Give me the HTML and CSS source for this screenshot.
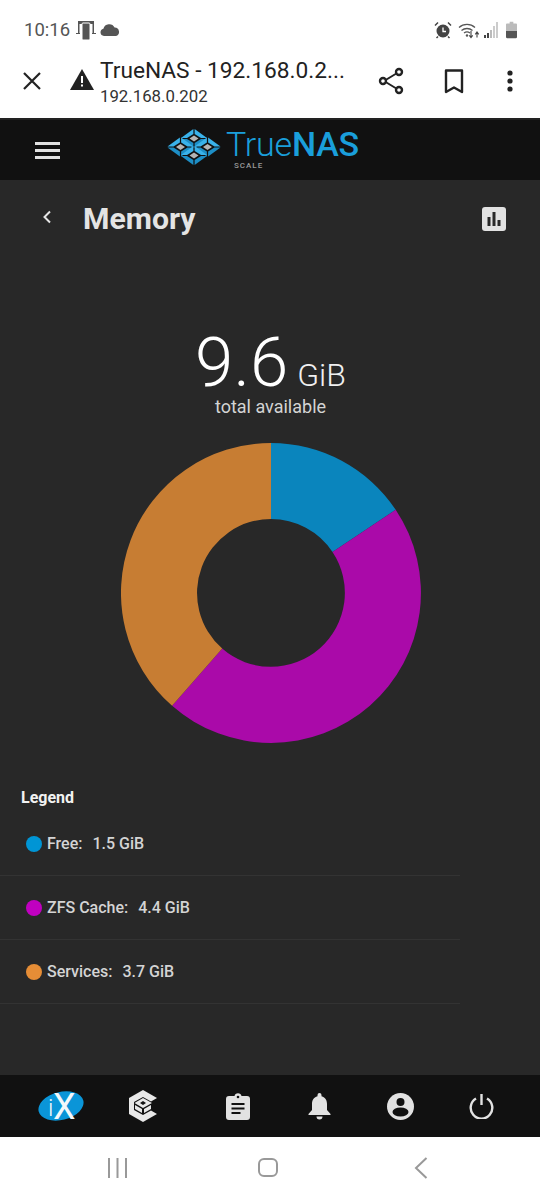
FILE: index.html

```html
<!DOCTYPE html>
<html lang="en">
<head>
  <meta charset="UTF-8">
  <title>TrueNAS - Memory</title>
  <link rel="stylesheet" href="styles.css">
</head>
<body>
  <div class="screen">
    <div class="status-bar">
      <div class="status-left">
        <span class="clock">10:16</span>
        <svg class="st-cast" width="20" height="19" viewBox="0 0 20 19"><path d="M2 0h16v12h-1.500V3h-13v9H2z M0 12h4v1H0z M16 12h4v1h-4z" fill="#555"/><rect x="6" y="2" width="8" height="17" rx="1" fill="#555" stroke="#fff" stroke-width="1"/></svg>
        <svg class="st-cloud" width="20" height="12" viewBox="0 0 20 12"><path d="M4 12a3.700 3.700 0 0 1-.6-7.300A6 6 0 0 1 14.600 3.600 4.300 4.300 0 0 1 16 12z" fill="#555"/></svg>
      </div>
      <div class="status-right">
        <svg width="18" height="18" viewBox="0 0 18 18"><circle cx="9" cy="10" r="6.500" fill="#444"/><path d="M9 6.500V10.500H12" stroke="#fff" stroke-width="1.300" fill="none"/><path d="M1 4.500 L4 1.500 M17 4.500 L14 1.500 M4 15.500 L2.500 17 M14 15.500 L15.500 17" stroke="#444" stroke-width="1.500"/></svg>
        <svg width="22" height="18" viewBox="0 0 22 18"><path d="M1 6.500a12 12 0 0 1 16 0M3.500 9.500a8.500 8.500 0 0 1 11 0M6 12a5 5 0 0 1 6 0" stroke="#555" stroke-width="1.300" fill="none"/><circle cx="9" cy="14.500" r="1.200" fill="#555"/><path d="M13 10v6M11.300 14.300 13 16.500l1.700-2.200M19 16.500v-5M17.300 13.300 19 11l1.700 2.300" stroke="#444" stroke-width="1.100" fill="none"/></svg>
        <svg class="st-signal" width="14" height="16" viewBox="0 0 14 16"><rect x="0" y="13" width="2" height="3" fill="#444"/><rect x="3" y="11" width="2" height="5" fill="#444"/><rect x="6" y="8" width="2" height="8" fill="#bbb"/><rect x="9" y="4" width="2" height="12" fill="#ccc"/><rect x="12" y="0" width="2" height="16" fill="#ccc"/></svg>
        <svg class="st-battery" width="11" height="18" viewBox="0 0 12 18"><path d="M4 0h4v2h3a1 1 0 0 1 1 1v7H0V3a1 1 0 0 1 1-1h3z" fill="#bbb"/><path d="M0 10h12v6.500a1.500 1.500 0 0 1-1.500 1.500h-9A1.500 1.500 0 0 1 0 16.500z" fill="#555"/></svg>
      </div>
    </div>

    <div class="tab-bar">
      <svg class="tab-close" width="20" height="20" viewBox="0 0 20 20"><path d="M2 2 18 18M18 2 2 18" stroke="#222" stroke-width="2.200"/></svg>
      <svg class="tab-warn" width="24" height="21" viewBox="0 0 24 21"><path d="M12 0 24 21H0z" fill="#222"/><path d="M11 7h2v7h-2zM11 15.500h2v2h-2z" fill="#fff"/></svg>
      <div class="tab-title">
        <div class="tab-name">TrueNAS - 192.168.0.2...</div>
        <div class="tab-url">192.168.0.202</div>
      </div>
      <svg class="tab-share" width="26" height="28" viewBox="0 0 26 28"><path d="M6 14 20 5.500M6 14 20 22.500" stroke="#222" stroke-width="2"/><g fill="#fff" stroke="#222" stroke-width="2.400"><circle cx="5" cy="14" r="3"/><circle cx="21" cy="5" r="3"/><circle cx="21" cy="23" r="3"/></g></svg>
      <svg class="tab-mark" width="20" height="25" viewBox="0 0 20 25"><path d="M2 1.500h16v21.500l-8-4.500-8 4.500z" fill="none" stroke="#222" stroke-width="2.400" stroke-linejoin="round"/></svg>
      <svg class="tab-more" width="6" height="22" viewBox="0 0 6 22"><circle cx="3" cy="3" r="2.600" fill="#222"/><circle cx="3" cy="11" r="2.600" fill="#222"/><circle cx="3" cy="19" r="2.600" fill="#222"/></svg>
    </div>

    <div class="top-bar">
      <div class="menu-btn"><span></span><span></span><span></span></div>
      <div class="logo">
        <svg class="logo-mark" width="54" height="36" viewBox="0 0 54 36">
          <defs>
            <g id="cell">
              <path d="M.6 -9.500 13 -.6 7 -.6 .6 -4.500z" fill="#3ab2ea"/>
              <path d="M-.6 -9.500 -13 -.6 -7 -.6 -.6 -4.500z" fill="#3ab2ea"/>
              <path d="M-13 .6 -.6 9.500 -.6 4.500 -7 .6z" fill="#1d8ec6"/>
              <path d="M13 .6 .6 9.500 .6 4.500 7 .6z" fill="#1d8ec6"/>
              <path d="M0 -3 4.500 0 0 3 -4.500 0z" fill="#b4b4b4"/>
            </g>
          </defs>
          <use href="#cell" x="27" y="9.500"/>
          <use href="#cell" x="13.500" y="18"/>
          <use href="#cell" x="40.500" y="18"/>
          <use href="#cell" x="27" y="26.500"/>
        </svg>
        <div class="logo-text">
          <div class="logo-word">True<b>NAS</b></div>
          <div class="logo-sub">SCALE</div>
        </div>
      </div>
    </div>

    <main class="content">
      <div class="page-head">
        <svg class="back" width="10" height="14" viewBox="0 0 10 14"><path d="M8 1.500 2.500 7 8 12.500" fill="none" stroke="#e6e6e6" stroke-width="2"/></svg>
        <h1 class="page-title">Memory</h1>
        <svg class="report" width="24" height="24" viewBox="0 0 24 24"><path d="M3 0h18a3 3 0 0 1 3 3v18a3 3 0 0 1-3 3H3a3 3 0 0 1-3-3V3a3 3 0 0 1 3-3z" fill="#e2e2e2"/><path d="M5.500 10h3v9h-3zM10.500 5h3v14h-3zM15.500 13h3v6h-3z" fill="#282828"/></svg>
      </div>

      <div class="total">
        <div class="total-value">9.6<span class="total-unit">GiB</span></div>
        <div class="total-label">total available</div>
      </div>

      <svg class="donut" width="300" height="300" viewBox="0 0 300 300">
        <path d="M150 0A150 150 0 0 1 274.700 66.700L211.500 108.900A74 74 0 0 0 150 76z" fill="#0a85bd"/>
        <path d="M274.700 66.700A150 150 0 0 1 51.100 262.800L101.200 205.600A74 74 0 0 0 211.500 108.900z" fill="#aa0aa9"/>
        <path d="M51.100 262.800A150 150 0 0 1 150 0V76A74 74 0 0 0 101.200 205.600z" fill="#c77d33"/>
      </svg>

      <section class="legend">
        <h2 class="legend-title">Legend</h2>
        <div class="legend-row"><i class="dot dot-free"></i><span class="legend-name">Free:</span><span>1.5 GiB</span></div>
        <div class="legend-row"><i class="dot dot-zfs"></i><span class="legend-name">ZFS Cache:</span><span>4.4 GiB</span></div>
        <div class="legend-row"><i class="dot dot-services"></i><span class="legend-name">Services:</span><span>3.7 GiB</span></div>
      </section>
    </main>

    <nav class="bottom-nav">
      <svg class="nav-ix" width="46" height="44" viewBox="0 -5 46 44"><ellipse cx="23" cy="17" rx="23" ry="14" transform="rotate(-14 23 17)" fill="#0a95d8"/><text class="ix-i" x="10" y="27">i</text><text class="ix-x" x="15" y="30">X</text></svg>
      <svg class="nav-apps" width="28" height="32" viewBox="0 0 28 32"><path d="M14 0 28 8 22 11.500 14 7 5 12V20L14 25 22 20.500 28 24 14 32 0 24V8z" fill="#e8e8e8"/><path d="M14 8 23 13 14 18 5.500 13z" fill="#e8e8e8"/><path d="M11 13 14 11 17 13 14 15z" fill="#111"/><path d="M6 15 13 19V23L6 19zM22 15 15 19V23L22 19z" fill="#e8e8e8"/></svg>
      <svg class="nav-tasks" width="24" height="27" viewBox="0 0 24 27"><path d="M3 3h5.500a3.600 3.600 0 0 1 7 0H21a3 3 0 0 1 3 3v18a3 3 0 0 1-3 3H3a3 3 0 0 1-3-3V6a3 3 0 0 1 3-3z" fill="#e2e2e2"/><circle cx="12" cy="4" r="1.300" fill="#111"/><path d="M5.500 10h13v2h-13zM5.500 14.500h13v2h-13zM5.500 19h9v2h-9z" fill="#111"/></svg>
      <svg class="nav-bell" width="23" height="27" viewBox="0 0 23 27"><path d="M11.500 0a2 2 0 0 1 2 2v1.200C17.500 4.200 19 7.500 19 11v6l3.500 4v1H.5v-1L4 17v-6C4 7.500 5.500 4.200 9.500 3.200V2a2 2 0 0 1 2-2zM8.500 23.500h6a3 3 0 0 1-6 0z" fill="#e2e2e2"/></svg>
      <svg class="nav-user" width="27" height="27" viewBox="0 0 27 27"><circle cx="13.500" cy="13.500" r="13.500" fill="#e2e2e2"/><circle cx="13.500" cy="9" r="4" fill="#111"/><ellipse cx="13.500" cy="19" rx="8" ry="4.500" fill="#111"/></svg>
      <svg class="nav-power" width="25" height="26" viewBox="0 0 25 26"><path d="M12.500 1v11" stroke="#e2e2e2" stroke-width="2.400" fill="none"/><path d="M7 5.500a10.800 10.800 0 1 0 11 0" stroke="#e2e2e2" stroke-width="2.400" fill="none"/></svg>
    </nav>

    <div class="sys-nav">
      <svg width="21" height="20" viewBox="0 0 21 20"><path d="M2 0v20M10.500 0v20M19 0v20" stroke="#999" stroke-width="2"/></svg>
      <svg width="20" height="19" viewBox="0 0 20 19"><rect x="1" y="1" width="18" height="17" rx="5" fill="none" stroke="#999" stroke-width="2"/></svg>
      <svg class="sys-back" width="14" height="22" viewBox="0 0 14 22"><path d="M12.500 1 2 11l10.500 10" fill="none" stroke="#999" stroke-width="2"/></svg>
    </div>
  </div>
</body>
</html>
```

FILE: styles.css

```css
* {
  box-sizing: border-box;
}

body {
  margin: 0;
  padding: 0;
  background-color: #fff;
  font-family: Roboto, "Liberation Sans", sans-serif;
}

.screen {
  width: 540px;
  height: 1200px;
  display: flex;
  flex-direction: column;
  overflow: hidden;
}

/* phone status bar */
.status-bar {
  height: 46px;
  padding: 21px 23px 0 24px;
  display: flex;
  justify-content: space-between;
  align-items: flex-start;
  background-color: #fff;
}

.status-left, .status-right {
  display: flex;
  align-items: center;
  height: 18px;
}

.status-right {
  gap: 6px;
}

.clock {
  font-size: 18.500px;
  color: #555;
  margin-right: 6px;
}

.st-cloud {
  margin-left: 4px;
}

.st-signal {
  margin-left: -2px;
}

.st-battery {
  margin-left: 2px;
}

/* browser custom tab */
.tab-bar {
  height: 74px;
  display: flex;
  align-items: flex-start;
  background-color: #fff;
  border-bottom: 2px solid #222;
}

.tab-close {
  margin: 25px 0 0 22px;
}

.tab-warn {
  margin: 23px 0 0 28px;
}

.tab-title {
  margin: 11px 0 0 6px;
  width: 256px;
  flex: none;
}

.tab-name {
  font-size: 22.700px;
  line-height: 28px;
  color: #222;
  white-space: nowrap;
}

.tab-url {
  font-size: 16.800px;
  line-height: 20px;
  margin-top: 1px;
  color: #333;
}

.tab-share {
  margin: 21px 0 0 22px;
}

.tab-mark {
  margin: 23px 0 0 40px;
}

.tab-more {
  margin: 24px 0 0 43px;
}

/* truenas header */
.top-bar {
  height: 60px;
  display: flex;
  align-items: center;
  background-color: #111;
}

.menu-btn {
  margin-left: 35px;
  width: 25px;
  display: flex;
  flex-direction: column;
  gap: 4px;
}

.menu-btn span {
  display: block;
  height: 3px;
  background-color: #e2e2e2;
}

.logo {
  margin-left: 107px;
  display: flex;
  align-items: flex-start;
  gap: 5px;
}

.logo-text {
  height: 44px;
  margin-top: -2px;
}

.logo-word {
  font-size: 34px;
  line-height: 34px;
  font-weight: 300;
  color: #1a9fdb;
  letter-spacing: -0.2px;
  white-space: nowrap;
}

.logo-word b {
  font-weight: 500;
}

.logo-sub {
  font-size: 8px;
  line-height: 8px;
  letter-spacing: 1px;
  font-weight: 500;
  color: #9a9a9a;
  margin: 1px 0 0 8px;
}

/* page body */
.content {
  height: 895px;
  background-color: #282828;
  display: flex;
  flex-direction: column;
}

.page-head {
  height: 77px;
  display: flex;
  align-items: center;
}

.back {
  margin: 0 0 4px 42px;
}

.page-title {
  margin: 0 0 0 31px;
  font-size: 30.200px;
  font-weight: 700;
  color: #e4e4e4;
  flex: 1;
}

.report {
  margin-right: 34px;
}

.total {
  margin-top: 74px;
  text-align: center;
  padding-left: 1px;
}

.total-value {
  font-size: 69px;
  line-height: 64px;
  font-weight: 300;
  color: #fff;
}

.total-unit {
  font-size: 32px;
  line-height: 0;
  margin-left: 9px;
  color: #f0f0f0;
}

.total-label {
  font-size: 18px;
  line-height: 20px;
  margin-top: 2px;
  color: #d4d4d4;
}

.donut {
  margin: 26px 0 0 121px;
  flex: none;
}

.legend {
  margin-top: 45px;
  width: 460px;
}

.legend-title {
  margin: 0 0 4px 21px;
  font-size: 16px;
  line-height: 20px;
  font-weight: 700;
  color: #f2f2f2;
}

.legend-row {
  height: 64px;
  display: flex;
  align-items: center;
  padding-left: 26px;
  font-size: 16px;
  font-weight: 500;
  color: #d4d4d4;
  border-bottom: 1px solid #333;
}

.legend-name {
  margin-right: 10px;
}

.dot {
  width: 16px;
  height: 16px;
  border-radius: 50%;
  margin-right: 5px;
}

.dot-free {
  background-color: #0095d5;
}

.dot-zfs {
  background-color: #c000c0;
}

.dot-services {
  background-color: #e68d36;
}

/* app footer */
.bottom-nav {
  height: 62px;
  background-color: #111;
  display: flex;
  align-items: center;
}

.nav-ix {
  margin-left: 38px;
}

.ix-i, .ix-x {
  font-family: Roboto, sans-serif;
  fill: #f4f8fa;
}

.ix-i {
  font-size: 24px;
  font-weight: 300;
}

.ix-x {
  font-size: 36px;
  font-weight: 400;
}

.nav-apps {
  margin-left: 45px;
}

.nav-tasks {
  margin-left: 69px;
}

.nav-bell {
  margin-left: 58px;
}

.nav-user {
  margin-left: 56px;
}

.nav-power {
  margin-left: 55px;
}

/* android buttons */
.sys-nav {
  height: 63px;
  background-color: #fff;
  display: flex;
  align-items: center;
  padding: 0 0 2px 107px;
  gap: 130px;
}

.sys-back {
  margin-left: 6px;
}
```
